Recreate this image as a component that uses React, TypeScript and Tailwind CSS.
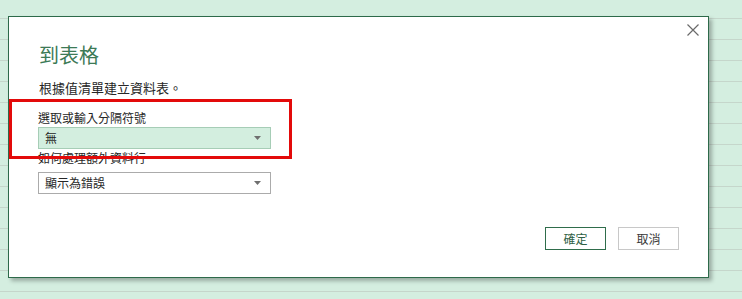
import React from "react";

const cjk = "font-['Noto_Sans_CJK_TC','Noto_Sans',sans-serif]";

function Caret() {
  return (
    <svg width="7" height="4" viewBox="0 0 7 4" className="shrink-0">
      <path d="M0 0h7L3.5 4z" fill="#6f6f6f" />
    </svg>
  );
}

function Select({ value, active }: { value: string; active?: boolean }) {
  return (
    <div
      className={`flex h-[22px] w-[233px] items-center justify-between border pl-[6px] pr-[9px] text-[12px] leading-[12px] text-[#262626] ${
        active ? "border-[#a6cdb6] bg-[#d3eedf]" : "border-[#ababab] bg-white"
      }`}
    >
      <span>{value}</span>
      <Caret />
    </div>
  );
}

export default function App() {
  return (
    <div
      className={`relative h-[299px] w-[742px] overflow-hidden bg-[#d4eee0] bg-[linear-gradient(to_bottom,transparent_20px,#c5d6cb_20px)] bg-[size:100%_21px] bg-[position:0_-2px] pl-[8px] pt-[16px] ${cjk}`}
    >
      {/* dialog */}
      <div className="relative flex h-[262px] w-[701px] flex-col border border-[#2d6a4a] bg-white pl-[29px] pt-[28px] shadow-[3px_3px_4px_rgba(0,0,0,0.28)]">
        <button className="absolute right-[9px] top-[7px] h-[12px] w-[12px]">
          <svg width="12" height="12" viewBox="0 0 12 12">
            <path d="M0.5 0.5l11 11M11.5 0.5l-11 11" stroke="#6a6a6a" strokeWidth="1.2" />
          </svg>
        </button>

        <h1 className="pl-[1px] text-[20px] font-normal leading-[20px] text-[#3c7a56]">到表格</h1>
        <p className="mt-[16px] pl-[1px] text-[13px] leading-[13px] text-[#262626]">根據值清單建立資料表。</p>

        <label className="mt-[18px] text-[12px] leading-[12px] text-[#262626]">選取或輸入分隔符號</label>
        <div className="mt-[3px]">
          <Select value="無" active />
        </div>

        <label className="mt-[3px] text-[12px] leading-[12px] text-[#262626]">如何處理額外資料行</label>
        <div className="mt-[8px]">
          <Select value="顯示為錯誤" />
        </div>

        <div className="mt-[33px] flex justify-end gap-[12px] pr-[29px]">
          <button className="h-[23px] w-[61px] border border-[#2f6d4b] text-[12px] leading-[12px] text-[#2f5f45]">
            確定
          </button>
          <button className="h-[23px] w-[61px] border border-[#c8c8c8] text-[12px] leading-[12px] text-[#3a3a3a]">
            取消
          </button>
        </div>
      </div>

      {/* annotation highlight */}
      <div className="absolute left-[9px] top-[99px] h-[60px] w-[283px] border-[3px] border-[#e30a0a]" />
    </div>
  );
}
